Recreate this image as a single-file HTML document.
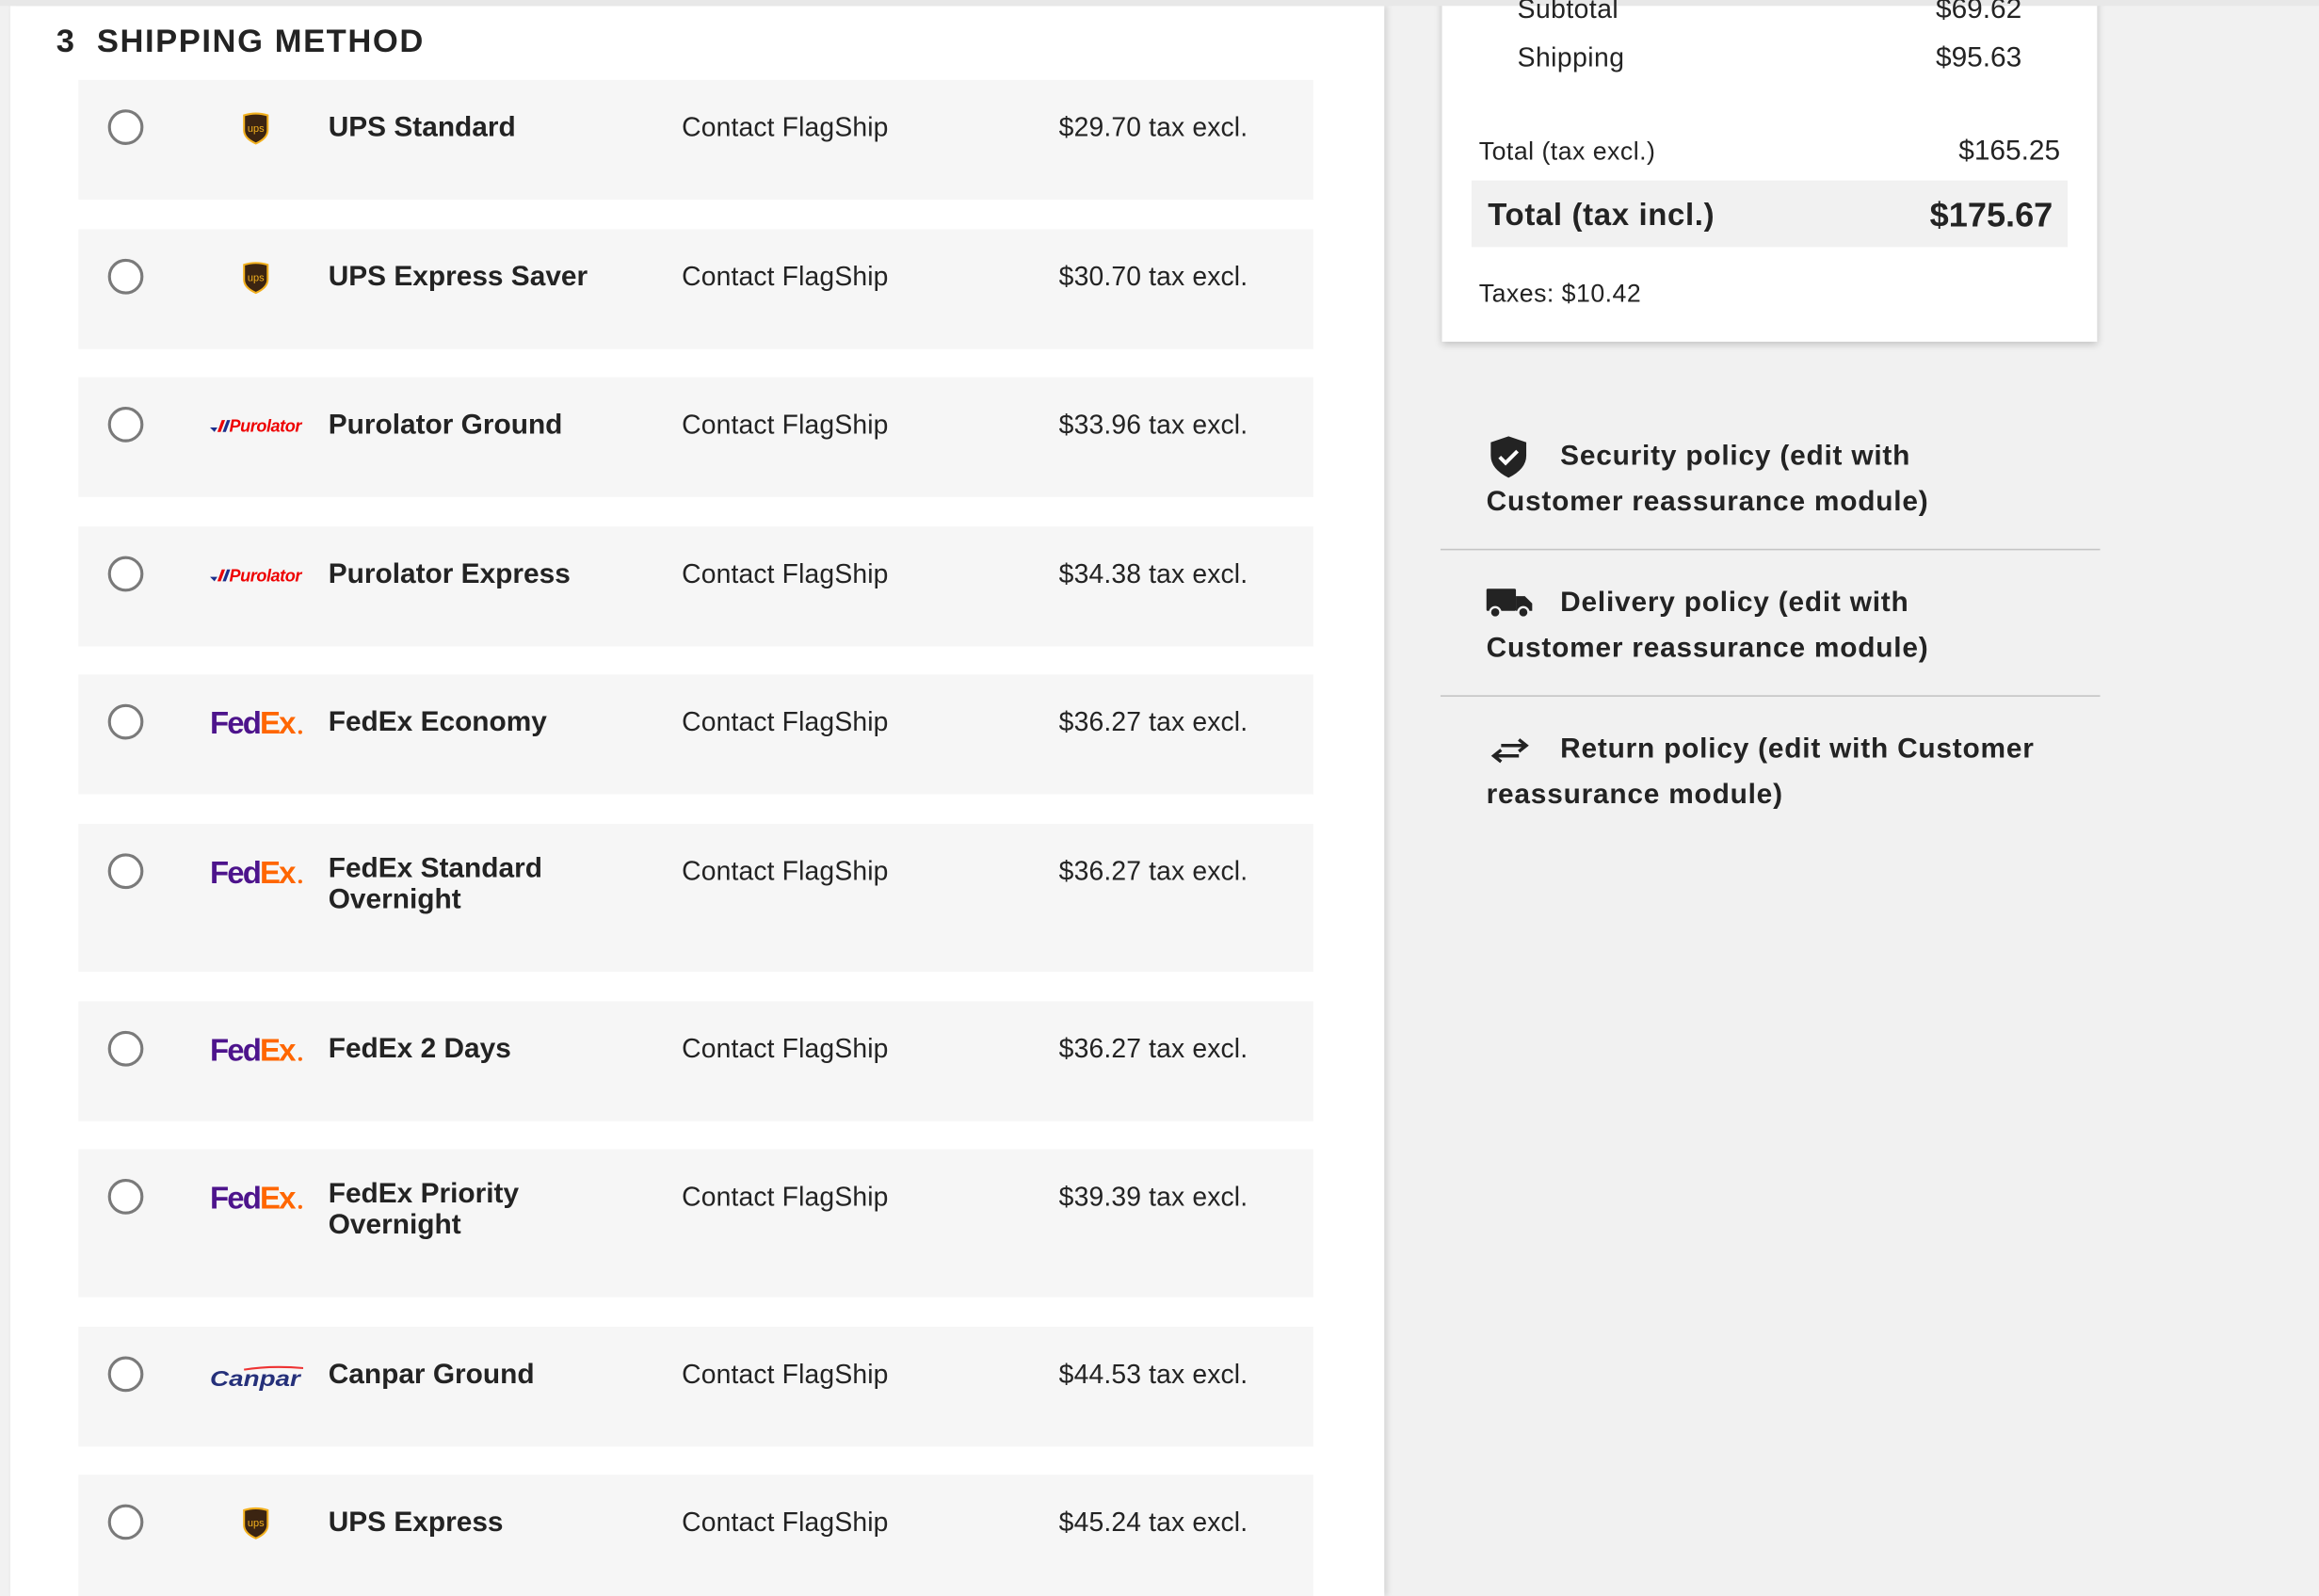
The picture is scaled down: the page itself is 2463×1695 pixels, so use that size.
<!DOCTYPE html>
<html><head><meta charset="utf-8"><style>
html,body{margin:0;padding:0;width:2463px;height:1695px;overflow:hidden;background:#f1f1f1}
#w{position:absolute;left:0;top:0;width:1568px;height:1079px;overflow:hidden;transform:scale(1.57079,1.5709);transform-origin:0 0;font-family:"Liberation Sans",sans-serif;color:#232323;background:#f1f1f1}
.abs{position:absolute}
#left{left:7px;top:4px;width:929px;height:1075px;background:#fff;box-shadow:2px 0 4px rgba(0,0,0,.12)}
.row{position:absolute;left:53px;width:835px;background:#f6f6f6}
.radio{position:absolute;left:20px;top:20px;width:20px;height:20px;border:2.5px solid #7a7a7a;border-radius:50%;background:#fff}
.name{position:absolute;left:169px;top:22px;font-weight:bold;font-size:19px;line-height:21px}
.ct{position:absolute;left:408px;top:22px;font-size:18px;line-height:21px;letter-spacing:.1px}
.pr{position:absolute;left:663px;top:22px;font-size:18px;line-height:21px;letter-spacing:.1px}
.logo{position:absolute;left:88px;top:20px;width:64px;height:24px}
#card{left:975px;top:-10px;width:443px;height:241px;background:#fff;box-shadow:0 2px 5px rgba(0,0,0,.2)}
.re{position:absolute;left:1005px;width:378px;font-weight:bold;font-size:19px;line-height:31px;text-indent:50px;letter-spacing:.5px}
.hr{position:absolute;left:974px;width:446px;height:0;border-top:1.5px solid #c4c4c4}
</style></head><body><div id="w">
<div class="abs" style="left:0;top:0;width:1568px;height:4px;background:#e8e8e8"></div>
<div id="left" class="abs"></div>
<div class="abs" style="left:38px;top:15px;font-weight:bold;font-size:22px;letter-spacing:1px">3&nbsp;&nbsp;SHIPPING METHOD</div>

<div class="row" style="top:54px;height:81px"><div class="radio"></div><svg class="logo" viewBox="0 0 64 24"><path d="M24 4q8-2.5 16 0v10q0 5.5-8 9q-8-3.5-8-9z" fill="#3b2411" stroke="#f2b01e" stroke-width="1.3"/><text x="32" y="15" font-size="7" fill="#f2b01e" text-anchor="middle" font-family="Liberation Sans">ups</text></svg><div class="name">UPS Standard</div><div class="ct">Contact FlagShip</div><div class="pr">$29.70 tax excl.</div></div>

<div class="row" style="top:155px;height:81px"><div class="radio"></div><svg class="logo" viewBox="0 0 64 24"><path d="M24 4q8-2.5 16 0v10q0 5.5-8 9q-8-3.5-8-9z" fill="#3b2411" stroke="#f2b01e" stroke-width="1.3"/><text x="32" y="15" font-size="7" fill="#f2b01e" text-anchor="middle" font-family="Liberation Sans">ups</text></svg><div class="name">UPS Express Saver</div><div class="ct">Contact FlagShip</div><div class="pr">$30.70 tax excl.</div></div>

<div class="row" style="top:255px;height:81px"><div class="radio"></div><svg class="logo" viewBox="0 0 64 24"><path d="M1 14h5l-2 3z" fill="#1c2f8c"/><path d="M6 17l3-8h2.2l-3 8z" fill="#e00"/><path d="M9.5 17l3-8h2.2l-3 8z" fill="#1c2f8c"/><text x="14" y="17" font-size="11.5" font-weight="bold" font-style="italic" fill="#e00" font-family="Liberation Sans" textLength="49">Purolator</text></svg><div class="name">Purolator Ground</div><div class="ct">Contact FlagShip</div><div class="pr">$33.96 tax excl.</div></div>

<div class="row" style="top:356px;height:81px"><div class="radio"></div><svg class="logo" viewBox="0 0 64 24"><path d="M1 14h5l-2 3z" fill="#1c2f8c"/><path d="M6 17l3-8h2.2l-3 8z" fill="#e00"/><path d="M9.5 17l3-8h2.2l-3 8z" fill="#1c2f8c"/><text x="14" y="17" font-size="11.5" font-weight="bold" font-style="italic" fill="#e00" font-family="Liberation Sans" textLength="49">Purolator</text></svg><div class="name">Purolator Express</div><div class="ct">Contact FlagShip</div><div class="pr">$34.38 tax excl.</div></div>

<div class="row" style="top:456px;height:81px"><div class="radio"></div><svg class="logo" viewBox="0 0 64 24"><text x="1" y="20" font-size="21" font-weight="bold" letter-spacing="-1.2" font-family="Liberation Sans"><tspan fill="#4d148c">Fed</tspan><tspan fill="#ff6600">Ex</tspan></text><circle cx="62" cy="19" r="1.3" fill="#ff6600"/></svg><div class="name">FedEx Economy</div><div class="ct">Contact FlagShip</div><div class="pr">$36.27 tax excl.</div></div>

<div class="row" style="top:557px;height:100px"><div class="radio"></div><svg class="logo" viewBox="0 0 64 24"><text x="1" y="20" font-size="21" font-weight="bold" letter-spacing="-1.2" font-family="Liberation Sans"><tspan fill="#4d148c">Fed</tspan><tspan fill="#ff6600">Ex</tspan></text><circle cx="62" cy="19" r="1.3" fill="#ff6600"/></svg><div class="name" style="top:20px">FedEx Standard<br>Overnight</div><div class="ct">Contact FlagShip</div><div class="pr">$36.27 tax excl.</div></div>

<div class="row" style="top:677px;height:81px"><div class="radio"></div><svg class="logo" viewBox="0 0 64 24"><text x="1" y="20" font-size="21" font-weight="bold" letter-spacing="-1.2" font-family="Liberation Sans"><tspan fill="#4d148c">Fed</tspan><tspan fill="#ff6600">Ex</tspan></text><circle cx="62" cy="19" r="1.3" fill="#ff6600"/></svg><div class="name">FedEx 2 Days</div><div class="ct">Contact FlagShip</div><div class="pr">$36.27 tax excl.</div></div>

<div class="row" style="top:777px;height:100px"><div class="radio"></div><svg class="logo" viewBox="0 0 64 24"><text x="1" y="20" font-size="21" font-weight="bold" letter-spacing="-1.2" font-family="Liberation Sans"><tspan fill="#4d148c">Fed</tspan><tspan fill="#ff6600">Ex</tspan></text><circle cx="62" cy="19" r="1.3" fill="#ff6600"/></svg><div class="name" style="top:20px">FedEx Priority<br>Overnight</div><div class="ct">Contact FlagShip</div><div class="pr">$39.39 tax excl.</div></div>

<div class="row" style="top:897px;height:81px"><div class="radio"></div><svg class="logo" viewBox="0 0 64 24"><path d="M24 9q18-3 41 -1" stroke="#e33" stroke-width="1.3" fill="none"/><text x="1" y="20" font-size="15" font-weight="bold" font-style="italic" fill="#25307a" font-family="Liberation Sans" textLength="61" lengthAdjust="spacingAndGlyphs">Canpar</text></svg><div class="name">Canpar Ground</div><div class="ct">Contact FlagShip</div><div class="pr">$44.53 tax excl.</div></div>

<div class="row" style="top:997px;height:90px"><div class="radio"></div><svg class="logo" viewBox="0 0 64 24"><path d="M24 4q8-2.5 16 0v10q0 5.5-8 9q-8-3.5-8-9z" fill="#3b2411" stroke="#f2b01e" stroke-width="1.3"/><text x="32" y="15" font-size="7" fill="#f2b01e" text-anchor="middle" font-family="Liberation Sans">ups</text></svg><div class="name">UPS Express</div><div class="ct">Contact FlagShip</div><div class="pr">$45.24 tax excl.</div></div>

<div id="card" class="abs"></div>
<div class="abs" style="left:0;top:0;width:1568px;height:4px;background:#e8e8e8"></div>
<div class="abs" style="left:1026px;top:-4px;font-size:18px;letter-spacing:.3px">Subtotal</div>
<div class="abs" style="left:1200px;width:167px;text-align:right;top:-4px;font-size:19px">$69.62</div>
<div class="abs" style="left:1026px;top:29px;font-size:18px;letter-spacing:.3px">Shipping</div>
<div class="abs" style="left:1200px;width:167px;text-align:right;top:29px;font-size:19px">$95.63</div>
<div class="abs" style="left:1000px;top:93px;font-size:17px;letter-spacing:.3px">Total (tax excl.)</div>
<div class="abs" style="left:1200px;width:193px;text-align:right;top:92px;font-size:19px">$165.25</div>
<div class="abs" style="left:995px;top:122px;width:403px;height:45px;background:#f1f1f1"></div>
<div class="abs" style="left:1006px;top:134px;font-size:21px;font-weight:bold;letter-spacing:.4px">Total (tax incl.)</div>
<div class="abs" style="left:1200px;width:188px;text-align:right;top:132px;font-size:23px;font-weight:bold">$175.67</div>
<div class="abs" style="left:1000px;top:189px;font-size:17px;letter-spacing:.3px">Taxes: $10.42</div>

<svg class="abs" style="left:1006px;top:294px" width="28" height="30" viewBox="0 0 28 30"><path d="M14 1l12 4v9q0 9-12 15q-12-6-12-15v-9z" fill="#232323"/><path d="M8 15l4 4l8-8" stroke="#fff" stroke-width="2.5" fill="none"/></svg>
<div class="re" style="top:293px">Security policy (edit with Customer reassurance module)</div>
<div class="hr" style="top:371px"></div>
<svg class="abs" style="left:1005px;top:396px" width="32" height="24" viewBox="0 0 32 24"><rect x="0" y="2" width="20" height="15" rx="1" fill="#232323"/><path d="M20 7h6l5 5v5h-11z" fill="#232323"/><circle cx="6" cy="18" r="3.5" fill="#232323" stroke="#f1f1f1" stroke-width="1.5"/><circle cx="25" cy="18" r="3.5" fill="#232323" stroke="#f1f1f1" stroke-width="1.5"/></svg>
<div class="re" style="top:392px">Delivery policy (edit with Customer reassurance module)</div>
<div class="hr" style="top:470px"></div>
<svg class="abs" style="left:1007px;top:498px" width="28" height="20" viewBox="0 0 28 20"><path d="M8 6h16M20 2l5 4l-5 4M20 13h-16M8 9l-5 4l5 4" stroke="#232323" stroke-width="2.2" fill="none"/></svg>
<div class="re" style="top:491px">Return policy (edit with Customer reassurance module)</div>
</div></body></html>
